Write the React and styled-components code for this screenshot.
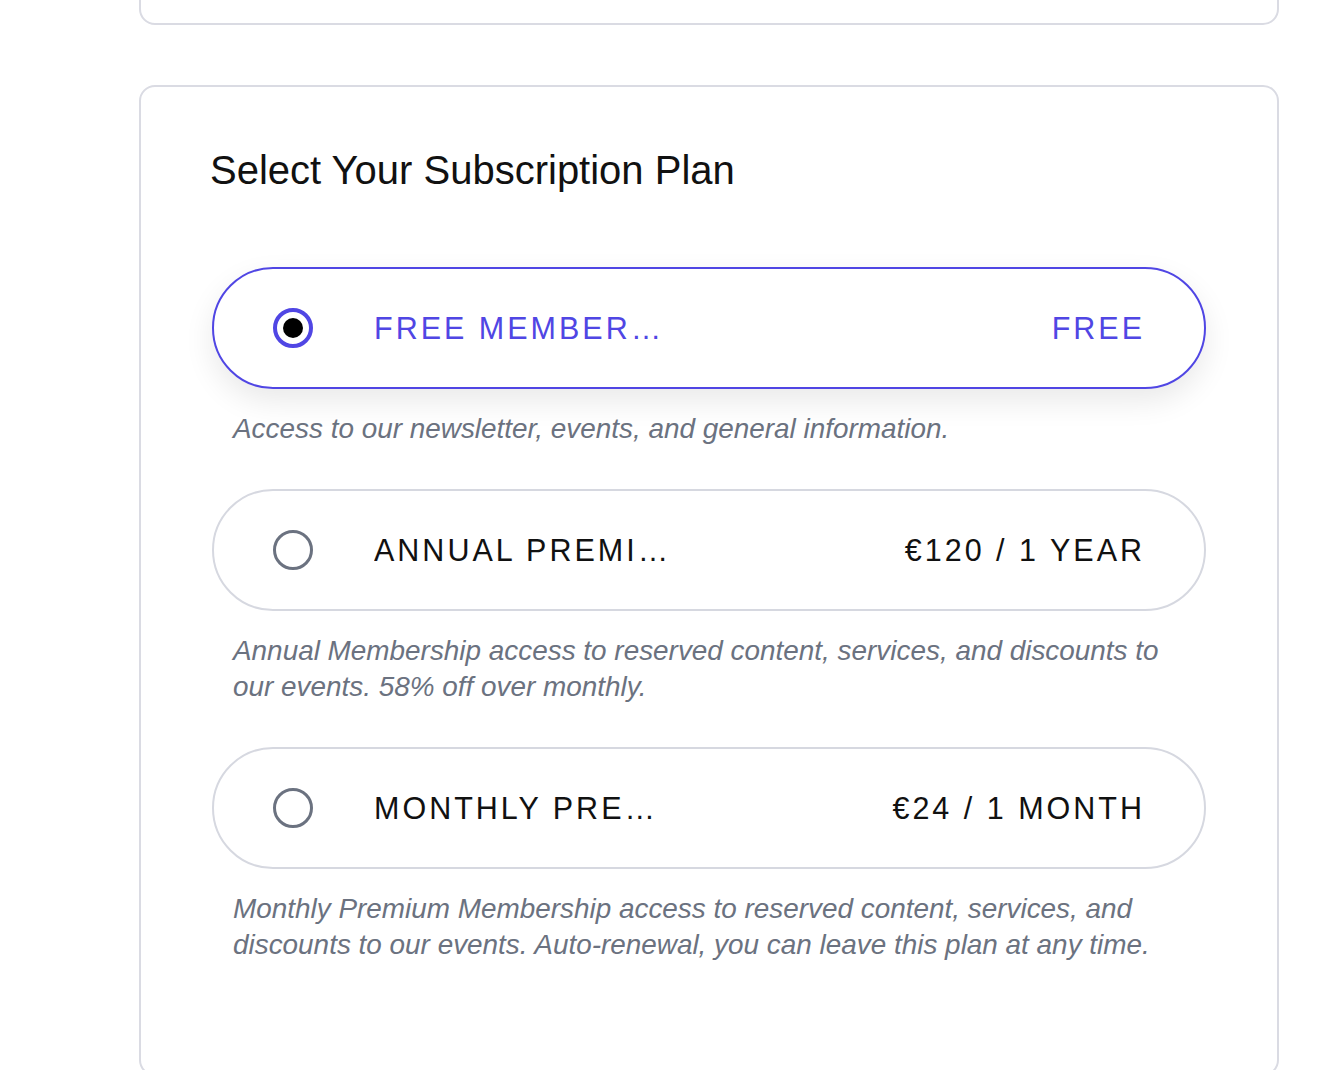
import React, { useState } from "react";
import styled, { createGlobalStyle, css } from "styled-components";

const GlobalStyle = createGlobalStyle`
  html, body { margin: 0; padding: 0; background: #ffffff; }
  body { font-family: "Liberation Sans", Arial, Helvetica, sans-serif; color: #111; overflow: hidden; }
  * { box-sizing: border-box; }
`;

const Page = styled.div`
  display: flex;
  flex-direction: column;
  gap: 60px;
  padding: 0 48px 0 139px;
  margin-top: -75px;
`;

const Card = styled.section`
  width: 1140px;
  border: 2px solid #dadbe3;
  border-radius: 16px;
  background: #fff;
  ${(p) =>
    p.$stub
      ? css`height: 100px;`
      : css`padding: 61px 70px 111px 69px;`}
`;

const Title = styled.h2`
  margin: 0;
  font-size: 40px;
  font-weight: 400;
  line-height: 45px;
  color: #111;
`;

const OptionList = styled.div`
  display: flex;
  flex-direction: column;
  margin-top: 74px;
`;

const Option = styled.button`
  display: flex;
  align-items: center;
  width: 994px;
  height: 122px;
  margin-left: 2px;
  padding: 0 62px 0 59px;
  border-radius: 61px;
  background: #fff;
  cursor: pointer;
  font-family: inherit;
  text-align: left;
  border: 2px solid ${(p) => (p.$selected ? "#5046e4" : "#d6d8e0")};
  box-shadow: ${(p) => (p.$selected ? "0 12px 30px rgba(0,0,0,0.09)" : "none")};
  color: ${(p) => (p.$selected ? "#5046e4" : "#111")};
`;

const Radio = styled.span`
  flex: 0 0 40px;
  width: 40px;
  height: 40px;
  border-radius: 50%;
  display: flex;
  align-items: center;
  justify-content: center;
  border: ${(p) => (p.$selected ? "4px solid #5046e4" : "3px solid #6b7280")};
  &::after {
    content: "";
    display: ${(p) => (p.$selected ? "block" : "none")};
    width: 20px;
    height: 20px;
    border-radius: 50%;
    background: #000;
  }
`;

const Label = styled.span`
  margin-left: 61px;
  width: 300px;
  white-space: nowrap;
  overflow: hidden;
  text-overflow: ellipsis;
  font-size: 30.5px;
  letter-spacing: 3px;
  text-transform: uppercase;
  line-height: 40px;
`;

const Price = styled.span`
  margin-left: auto;
  white-space: nowrap;
  font-size: 30.5px;
  letter-spacing: 3px;
  margin-right: -3px;
  text-transform: uppercase;
  line-height: 40px;
`;

const Description = styled.p`
  margin: 22px 0 42px 0;
  padding: 0 20px 0 23px;
  width: 994px;
  font-style: italic;
  font-size: 27.9px;
  line-height: 36px;
  color: #6b7280;
  &:last-child { margin-bottom: 0; }
`;

const plans = [
  {
    id: "free",
    name: "Free Membership",
    price: "Free",
    desc: "Access to our newsletter, events, and general information.",
  },
  {
    id: "annual",
    name: "Annual Premium Membership",
    price: "€120 / 1 Year",
    desc: "Annual Membership access to reserved content, services, and discounts to our events. 58% off over monthly.",
  },
  {
    id: "monthly",
    name: "Monthly Premium Membership",
    price: "€24 / 1 Month",
    desc: "Monthly Premium Membership access to reserved content, services, and discounts to our events. Auto-renewal, you can leave this plan at any time.",
  },
];

export default function App() {
  const [selected, setSelected] = useState("free");
  return (
    <>
      <GlobalStyle />
      <Page>
        <Card $stub />
        <Card>
          <Title>Select Your Subscription Plan</Title>
          <OptionList>
            {plans.map((p) => (
              <React.Fragment key={p.id}>
                <Option
                  type="button"
                  $selected={selected === p.id}
                  onClick={() => setSelected(p.id)}
                >
                  <Radio $selected={selected === p.id} />
                  <Label>{p.name}</Label>
                  <Price>{p.price}</Price>
                </Option>
                <Description>{p.desc}</Description>
              </React.Fragment>
            ))}
          </OptionList>
        </Card>
      </Page>
    </>
  );
}
